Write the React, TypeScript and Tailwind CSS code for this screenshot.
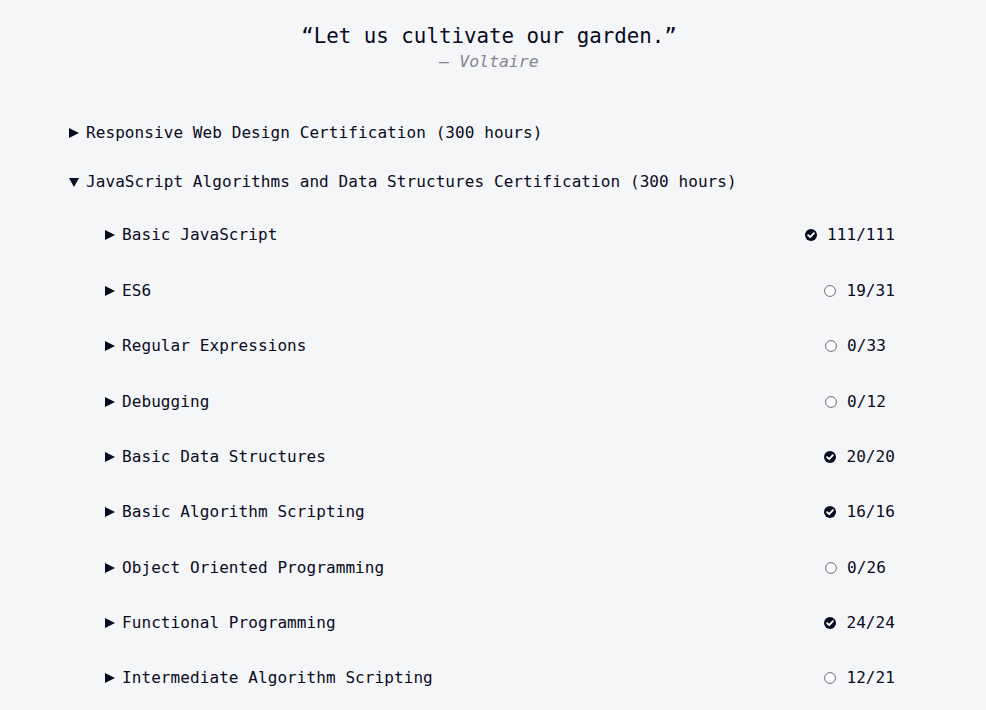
import React from "react";

const rows: { name: string; done: boolean; progress: string }[] = [
  { name: "Basic JavaScript", done: true, progress: "111/111" },
  { name: "ES6", done: false, progress: "19/31" },
  { name: "Regular Expressions", done: false, progress: "0/33" },
  { name: "Debugging", done: false, progress: "0/12" },
  { name: "Basic Data Structures", done: true, progress: "20/20" },
  { name: "Basic Algorithm Scripting", done: true, progress: "16/16" },
  { name: "Object Oriented Programming", done: false, progress: "0/26" },
  { name: "Functional Programming", done: true, progress: "24/24" },
  { name: "Intermediate Algorithm Scripting", done: false, progress: "12/21" },
];

function Right() {
  return (
    <svg width="10" height="10" viewBox="0 0 10 10" className="shrink-0">
      <polygon points="0,0 10,5 0,10" fill="#0a0a23" />
    </svg>
  );
}

function Down() {
  return (
    <svg width="10" height="9" viewBox="0 0 10 9" className="shrink-0">
      <polygon points="0,0 10,0 5,9" fill="#0a0a23" />
    </svg>
  );
}

function Check() {
  return (
    <svg width="12" height="12" viewBox="0 0 12 12" className="shrink-0">
      <circle cx="6" cy="6" r="6" fill="#0a0a23" />
      <path d="M3.2 6.2 L5.2 8.1 L8.9 4.2" stroke="#fff" strokeWidth="1.9" fill="none" strokeLinecap="round" strokeLinejoin="round" />
    </svg>
  );
}

function Circle() {
  return (
    <svg width="12" height="12" viewBox="0 0 12 12" className="shrink-0">
      <circle cx="6" cy="6" r="5.4" fill="#ffffff" stroke="#6b6b78" strokeWidth="1" />
    </svg>
  );
}

export default function App() {
  return (
    <div
      className="min-h-[710px] w-full bg-[#f5f6f7] text-[#0a0a23]"
      style={{ fontFamily: '"DejaVu Sans Mono", "Liberation Mono", monospace' }}
    >
      <div className="flex flex-col items-center pr-[8px] pt-[23px]">
        <div className="h-[26px] text-[20.8px] leading-[26px]">“Let us cultivate our garden.”</div>
        <div className="mt-[1px] h-[24px] text-[16.5px] italic leading-[24px] text-[#858591]">— Voltaire</div>
      </div>
      <div className="pl-[69px] pr-[91px] text-[16px] tracking-[0.08px]">
        <div className="mt-[47px] flex h-[24px] items-center gap-[7px] leading-[24px]">
          <Right />
          <span>Responsive Web Design Certification (300 hours)</span>
        </div>
        <div className="mt-[25px] flex h-[24px] items-center gap-[7px] leading-[24px]">
          <Down />
          <span>JavaScript Algorithms and Data Structures Certification (300 hours)</span>
        </div>
        <div className="mt-[13.7px] pl-[36px]">
          {rows.map((r) => (
            <div key={r.name} className="flex h-[55.375px] items-center">
              <div className="flex items-center gap-[7px]">
                <Right />
                <span>{r.name}</span>
              </div>
              <div className="ml-auto flex items-center gap-[10px]">
                {r.done ? <Check /> : <Circle />}
                <span className="min-w-[48px]">{r.progress}</span>
              </div>
            </div>
          ))}
        </div>
      </div>
    </div>
  );
}
